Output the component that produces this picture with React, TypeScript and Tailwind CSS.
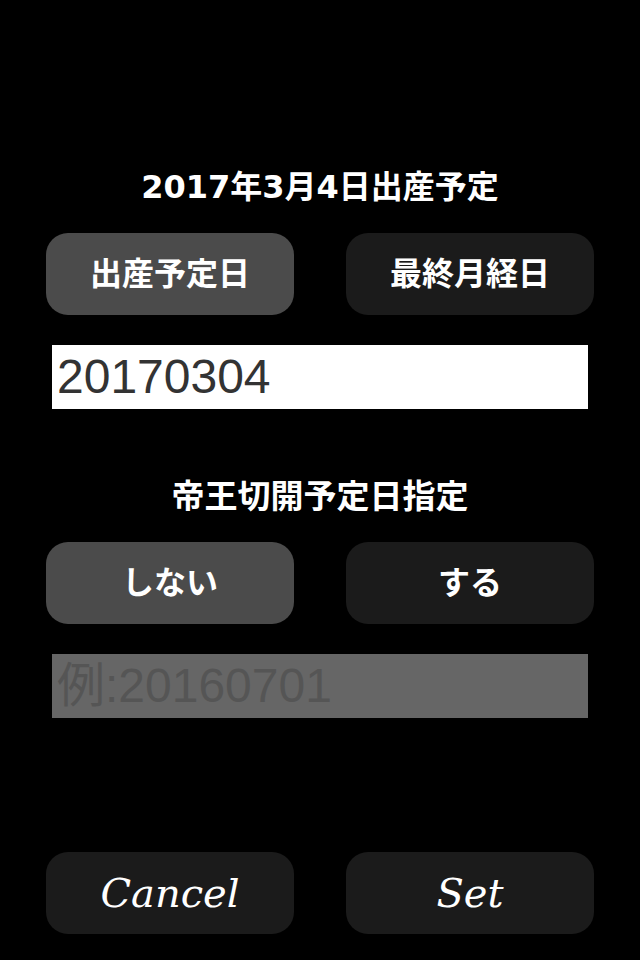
import React from "react";

function Choice({ label, active }: { label: string; active?: boolean }) {
  return (
    <button
      className={
        active
          ? "h-[82px] w-[248px] rounded-[22px] bg-[#4b4b4b] font-['DejaVu_Sans','Noto_Sans_CJK_JP',sans-serif] text-[32px] font-bold text-white"
          : "h-[82px] w-[248px] rounded-[22px] bg-[#1b1b1b] font-['DejaVu_Sans','Noto_Sans_CJK_JP',sans-serif] text-[32px] font-bold text-white"
      }
    >
      {label}
    </button>
  );
}

function ScriptButton({ label }: { label: string }) {
  return (
    <button className="h-[82px] w-[248px] rounded-[22px] bg-[#1b1b1b] font-['DejaVu_Serif','Liberation_Serif',cursive] text-[40px] italic text-white">
      {label}
    </button>
  );
}

export default function App() {
  return (
    <div className="flex h-[960px] w-[640px] flex-col bg-black px-[46px] pt-[167px] font-['Liberation_Sans','Noto_Sans_CJK_JP',sans-serif]">
      <div className="flex h-[40px] items-center justify-center font-['DejaVu_Sans','Noto_Sans_CJK_JP',sans-serif] text-[32px] font-bold text-white">
        2017年3月4日出産予定
      </div>

      <div className="mt-[26px] flex justify-between">
        <Choice label="出産予定日" active />
        <Choice label="最終月経日" />
      </div>

      <input
        className="mx-[6px] mt-[30px] h-[64px] bg-white px-[5px] font-['Liberation_Sans','Noto_Sans_CJK_JP',sans-serif] text-[48px] text-[#333333] outline-none"
        defaultValue="20170304"
      />

      <div className="mt-[68px] flex h-[40px] items-center justify-center font-['DejaVu_Sans','Noto_Sans_CJK_JP',sans-serif] text-[33px] font-bold text-white">
        帝王切開予定日指定
      </div>

      <div className="mt-[25px] flex justify-between">
        <Choice label="しない" active />
        <Choice label="する" />
      </div>

      <input
        className="mx-[6px] mt-[30px] h-[64px] bg-[#666666] px-[5px] font-['Liberation_Sans','Noto_Sans_CJK_JP',sans-serif] text-[48px] text-[#333333] outline-none placeholder:text-[#555555]"
        placeholder="例:20160701"
        disabled
      />

      <div className="mt-[134px] flex justify-between">
        <ScriptButton label="Cancel" />
        <ScriptButton label="Set" />
      </div>
    </div>
  );
}
